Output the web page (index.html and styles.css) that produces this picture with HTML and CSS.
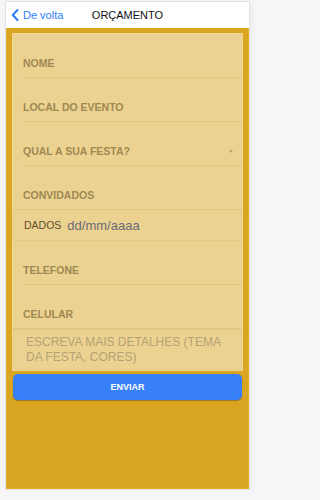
FILE: index.html
```html
<!DOCTYPE html>
<html lang="pt">
<head>
<meta charset="utf-8">
<title>Orçamento</title>
<link rel="stylesheet" href="styles.css">
</head>
<body>
<div class="phone">
  <header class="bar">
    <a class="back" href="#">
      <svg class="chev" width="8" height="12" viewBox="0 0 8 12"><path d="M6.5 1 L1.8 6 L6.5 11" fill="none" stroke="#2f7cf6" stroke-width="2" stroke-linecap="round" stroke-linejoin="round"/></svg>
      <span>De volta</span>
    </a>
    <h1 class="title">ORÇAMENTO</h1>
  </header>
  <main class="content">
    <form class="panel">
      <div class="item inset"><span class="label">NOME</span></div>
      <div class="item inset"><span class="label">LOCAL DO EVENTO</span></div>
      <div class="item inset select"><span class="label">QUAL A SUA FESTA?</span><span class="arrow"></span></div>
      <div class="item full"><span class="label">CONVIDADOS</span></div>
      <div class="date"><span class="dlabel">DADOS</span><span class="dval">dd/mm/aaaa</span></div>
      <div class="item inset"><span class="label">TELEFONE</span></div>
      <div class="item full"><span class="label">CELULAR</span></div>
      <div class="area">ESCREVA MAIS DETALHES (TEMA DA FESTA, CORES)</div>
    </form>
    <button class="send" type="button">ENVIAR</button>
  </main>
</div>
</body>
</html>
```
FILE: styles.css
```css
* { box-sizing: border-box; }
body {
  margin: 0;
  background: #f6f6f8;
  font-family: "Liberation Sans", Arial, sans-serif;
}
.phone {
  margin: 1px 0 0 5px;
  width: 245px;
  height: 489px;
  border: 1px solid #e2e2e2;
  box-shadow: 2px 1px 6px rgba(0,0,0,0.05);
  display: flex;
  flex-direction: column;
}
.bar {
  height: 26px;
  background: #ffffff;
  display: flex;
  align-items: center;
  position: relative;
  flex: none;
}
.back {
  display: flex;
  align-items: center;
  gap: 4px;
  padding-left: 5px;
  color: #2f7cf6;
  text-decoration: none;
  font-size: 11px;
}
.title {
  position: absolute;
  left: 0;
  right: 0;
  top: 0;
  margin: 0;
  line-height: 26px;
  text-align: center;
  font-size: 11px;
  font-weight: normal;
  color: #111;
  pointer-events: none;
}
.content {
  flex: 1;
  background: #daa520;
  border: 1px solid #e2b02c;
  border-top: none;
  padding: 5px 5px 0 5px;
}
.panel {
  background: #ecd290;
  border: 1px solid #efd79a;
  margin: 0;
}
.item {
  height: 44px;
  display: flex;
  align-items: flex-end;
  padding-bottom: 8px;
  border-bottom: 1px solid #e1c57f;
  position: relative;
}
.item.inset { margin-left: 10px; }
.item.full { padding-left: 10px; }
.label {
  font-size: 10.5px;
  line-height: 12px;
  font-weight: bold;
  color: #9e8853;
}
.arrow {
  position: absolute;
  right: 9px;
  bottom: 12px;
  width: 0;
  height: 0;
  border-left: 2.5px solid transparent;
  border-right: 2.5px solid transparent;
  border-top: 3px solid #bfa466;
}
.date {
  height: 31px;
  display: flex;
  align-items: center;
  gap: 6px;
  padding-left: 10px;
  border: 1px solid #e6cb86;
  border-top: none;
}
.dlabel {
  font-size: 10.5px;
  color: #5e4f2d;
}
.dval {
  font-size: 13px;
  color: #6a6b78;
}
.area {
  height: 41px;
  padding: 5px 8px 0 12px;
  border: 1px solid #e6cb86;
  font-size: 12px;
  line-height: 15px;
  color: #b4a276;
}
.send {
  display: block;
  width: calc(100% - 2px);
  margin: 3px 0 0 1px;
  height: 26px;
  border: none;
  border-radius: 5px;
  background: #3880f8;
  color: #ffffff;
  font-family: "Liberation Sans", Arial, sans-serif;
  font-size: 9px;
  font-weight: bold;
  box-shadow: 0 1px 1px rgba(60,60,60,0.45);
}
```
